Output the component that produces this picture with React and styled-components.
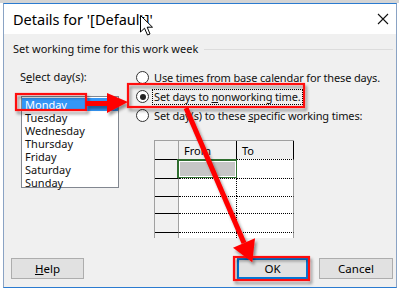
import styled, { createGlobalStyle } from "styled-components";

const GlobalStyle = createGlobalStyle`
  body {
    margin: 0;
    background: #f4f4f4;
  }
`;

const Screen = styled.div`
  position: relative;
  width: 399px;
  height: 293px;
  overflow: hidden;
  background: linear-gradient(#d4d4d4 0 3px, #ffffff 3px);
  padding: 3px 0 0 3px;
  box-sizing: border-box;
  font-family: "Noto Sans", "Open Sans", sans-serif;
  font-size: 11px;
  color: #111;
`;

const Dialog = styled.div`
  width: 394px;
  height: 285px;
  box-sizing: border-box;
  border: 1px solid #8aa3c4;
  border-top-color: #2b7bd0;
  border-bottom-color: #2b7bd0;
  display: flex;
  flex-direction: column;
  background: #f0f0f0;
`;

const TitleBar = styled.div`
  height: 30px;
  flex-shrink: 0;
  background: #ffffff;
  display: flex;
  align-items: center;
  justify-content: space-between;
  padding: 0 7px 0 9px;
`;

const Title = styled.span`
  font-size: 14.5px;
  color: #000;
`;

const CloseBtn = styled.svg`
  width: 12px;
  height: 12px;
`;

const Body = styled.div`
  flex: 1;
  display: flex;
  flex-direction: column;
  padding: 7px 3px 8px 7px;
`;

const GroupHeader = styled.div`
  display: flex;
  align-items: center;
  gap: 6px;
  line-height: 16px;
  padding-left: 2px;
`;

const GroupLine = styled.div`
  flex: 1;
  height: 1px;
  background: #dcdcdc;
`;

const Main = styled.div`
  display: flex;
  gap: 17px;
  margin-top: 11px;
  padding-left: 9px;
`;

const LeftCol = styled.div`
  width: 99px;
  flex-shrink: 0;
  display: flex;
  flex-direction: column;
`;

const Label = styled.div`
  line-height: 18px;
  white-space: nowrap;
`;

const U = styled.span`
  text-decoration: underline;
`;

const ListBox = styled.div`
  margin: 10px 0 0 1px;
  height: 92px;
  box-sizing: border-box;
  border: 1px solid #828790;
  background: #fff;
`;

const ListItem = styled.div`
  height: 13px;
  line-height: 13px;
  padding-left: 3px;
  background: ${(p) => (p.$selected ? "#3396f6" : "transparent")};
  color: ${(p) => (p.$selected ? "#fff" : "#111")};
  margin-top: ${(p) => (p.$first ? "1px" : "0")};
`;

const RightCol = styled.div`
  flex: 1;
  min-width: 0;
  display: flex;
  flex-direction: column;
`;

const RadioRow = styled.div`
  height: 19px;
  display: flex;
  align-items: center;
  gap: 3px;
  white-space: nowrap;
`;

const RadioCircle = styled.span`
  width: 11px;
  height: 11px;
  border: 1px solid #333;
  border-radius: 50%;
  background: #fff;
  display: flex;
  align-items: center;
  justify-content: center;
  flex-shrink: 0;
  &::after {
    content: "";
    display: ${(p) => (p.$checked ? "block" : "none")};
    width: 6px;
    height: 6px;
    border-radius: 50%;
    background: #222;
  }
`;

const RadioText = styled.span`
  padding: 0 1px;
  line-height: 14px;
  letter-spacing: -0.15px;
  border: 1px dotted ${(p) => (p.$focus ? "#000" : "transparent")};
`;

const Table = styled.div`
  margin: 15px 0 0 18px;
  width: 140px;
  height: 98px;
  overflow: hidden;
  box-sizing: border-box;
  border-left: 1px solid #a0a0a0;
  border-top: 1px solid #a0a0a0;
  display: grid;
  grid-template-columns: 24px 58px 57px;
  grid-template-rows: 18px 19px 18px 17px 19px 8px;
  background: #f0f0f0;
`;

const Corner = styled.div`
  border-right: 1px solid #a0a0a0;
`;

const ColHead = styled.div`
  border-right: 1px solid #000;
  padding: 3px 0 0 5px;
  line-height: 14px;
  color: #000;
`;

const RowHead = styled.div`
  border-top: 1px solid #000;
  border-right: 1px solid #a0a0a0;
`;

const Cell = styled.div`
  background: #fff;
  border-top: 1px dotted #000;
  border-right: 1px ${(p) => (p.$last ? "solid #a0a0a0" : "dotted #000")};
`;

const SelectedCell = styled.div`
  background: #c6c6c6;
  border: 2px solid #2f6e2f;
  box-shadow: inset 0 0 0 1px #fff;
  margin: 0 -1px -1px -2px;
`;

const Footer = styled.div`
  margin-top: auto;
  display: flex;
  align-items: center;
`;

const Button = styled.button`
  height: 21px;
  width: ${(p) => p.$w}px;
  box-sizing: border-box;
  background: #e1e1e1;
  border: ${(p) => (p.$default ? "2px solid #0078d7" : "1px solid #adadad")};
  font-family: inherit;
  font-size: 11.5px;
  color: #000;
  padding: 0;
  margin-left: ${(p) => p.$ml || 0}px;
`;

const Overlay = styled.svg`
  position: absolute;
  left: 0;
  top: 0;
  pointer-events: none;
`;

const days = ["Monday", "Tuesday", "Wednesday", "Thursday", "Friday", "Saturday", "Sunday"];

export default function App() {
  return (
    <>
      <GlobalStyle />
      <Screen>
        <Dialog>
          <TitleBar>
            <Title>Details for '[Default]'</Title>
            <CloseBtn viewBox="0 0 12 12">
              <path d="M1 1 L11 11 M11 1 L1 11" stroke="#111" strokeWidth="1.1" />
            </CloseBtn>
          </TitleBar>
          <Body>
            <GroupHeader>
              <span>Set working time for this work week</span>
              <GroupLine />
            </GroupHeader>
            <Main>
              <LeftCol>
                <Label>
                  S<U>e</U>lect day(s):
                </Label>
                <ListBox>
                  {days.map((d, i) => (
                    <ListItem key={d} $selected={i === 0} $first={i === 0}>
                      {d}
                    </ListItem>
                  ))}
                </ListBox>
              </LeftCol>
              <RightCol>
                <RadioRow>
                  <RadioCircle />
                  <RadioText>
                    Use times from base calen<U>d</U>ar for these days.
                  </RadioText>
                </RadioRow>
                <RadioRow>
                  <RadioCircle $checked />
                  <RadioText $focus>
                    Set days to <U>n</U>onworking time.
                  </RadioText>
                </RadioRow>
                <RadioRow>
                  <RadioCircle />
                  <RadioText>
                    Set day(s) to these <U>s</U>pecific working times:
                  </RadioText>
                </RadioRow>
                <Table>
                  <Corner />
                  <ColHead>From</ColHead>
                  <ColHead>To</ColHead>
                  <RowHead />
                  <SelectedCell />
                  <Cell $last />
                  {[0, 1, 2, 3].map((r) => [
                    <RowHead key={"h" + r} />,
                    <Cell key={"a" + r} />,
                    <Cell key={"b" + r} $last />,
                  ])}
                </Table>
              </RightCol>
            </Main>
            <Footer>
              <Button $w={73}>
                <U>H</U>elp
              </Button>
              <Button $w={71} $default $ml={153}>
                OK
              </Button>
              <Button $w={74} $ml={11}>
                Cancel
              </Button>
            </Footer>
          </Body>
        </Dialog>

        <Overlay width="399" height="293" viewBox="0 0 399 293">
          <defs>
            <filter id="sh" x="-20%" y="-20%" width="140%" height="140%">
              <feDropShadow dx="2" dy="3" stdDeviation="1.6" floodColor="#000" floodOpacity="0.4" />
            </filter>
          </defs>
          <g filter="url(#sh)">
            <rect x="16" y="94" width="70" height="16" fill="none" stroke="#ff1010" strokeWidth="2.2" />
            <rect x="128" y="84" width="176" height="23" fill="none" stroke="#ff1010" strokeWidth="2.2" />
            <rect x="234" y="257" width="75" height="23" fill="none" stroke="#ff1010" strokeWidth="2.2" />
            <polygon points="86,101 108,101 108,106 86,106" fill="#ff0000" />
            <polygon points="107,93 128,102 107,113" fill="#ff0000" />
            <polygon points="188.3,107 183.7,109 241.7,244 246.3,242" fill="#ff0000" />
            <polygon points="255,238.3 233,247.7 252.3,262.3" fill="#ff0000" />
          </g>
          <path
            d="M140.5 15.5 L140.5 32 L144.5 28.2 L147.5 35 L150 34 L147.2 27.2 L152.5 27.2 Z"
            fill="#fff"
            stroke="#000"
            strokeWidth="1"
          />
        </Overlay>
      </Screen>
    </>
  );
}
